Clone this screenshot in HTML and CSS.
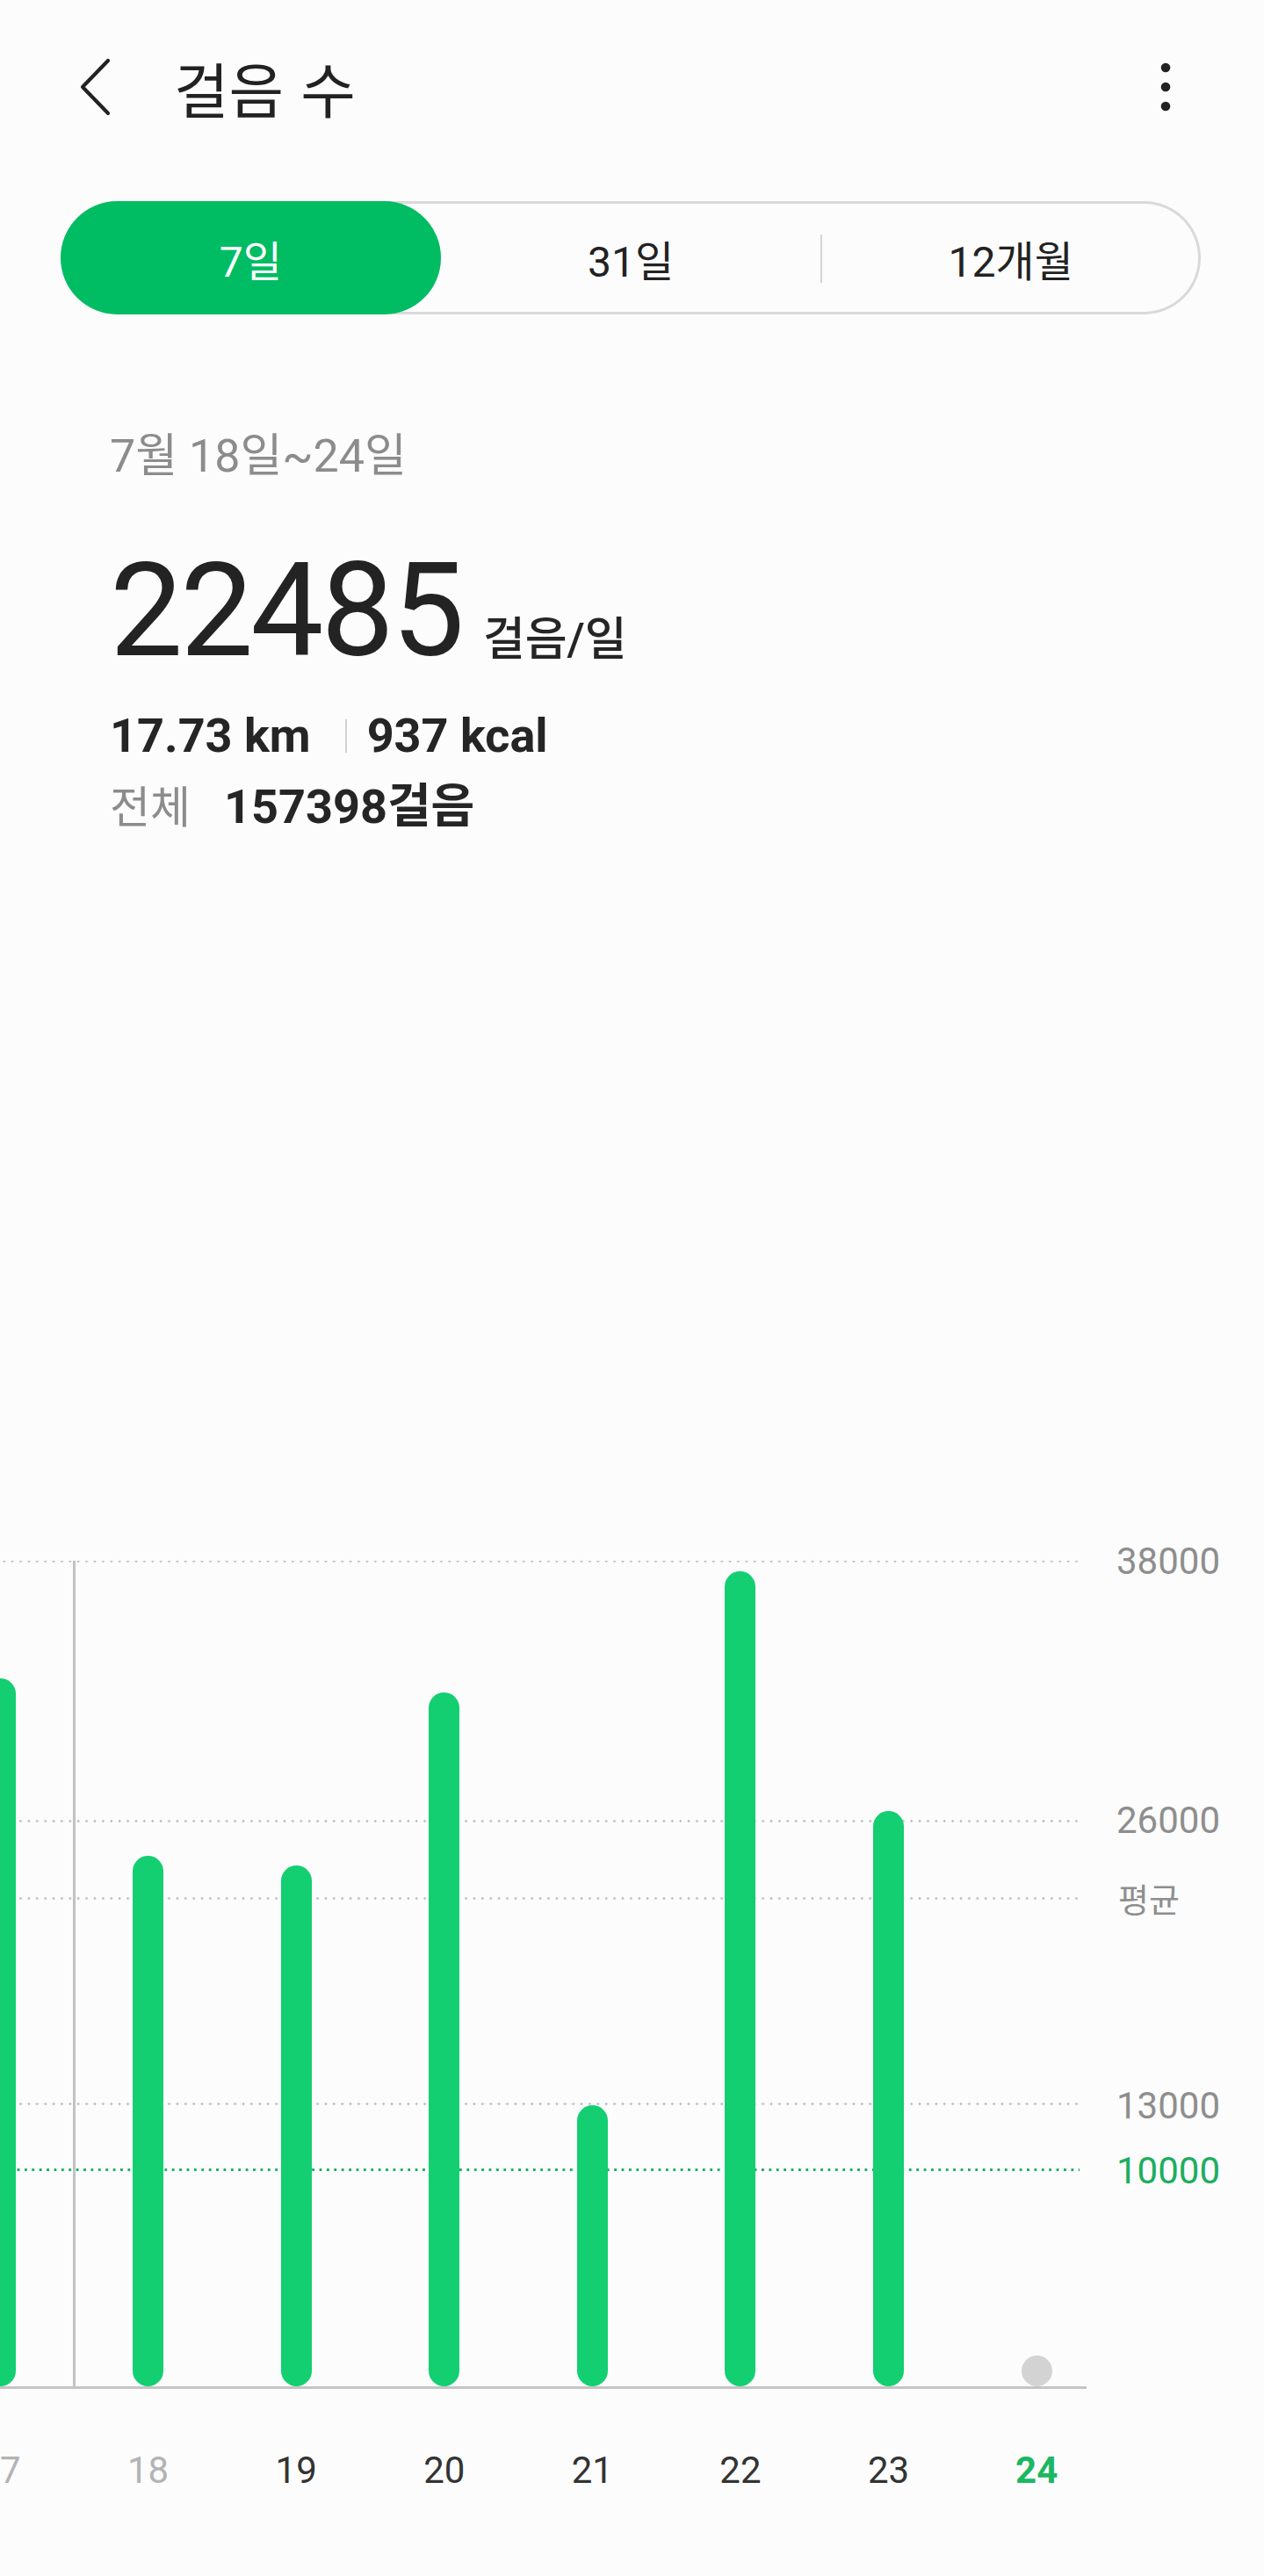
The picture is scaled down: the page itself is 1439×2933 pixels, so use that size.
FILE: index.html
```html
<!DOCTYPE html>
<html lang="ko">
<head>
<meta charset="utf-8">
<title>걸음 수</title>
<link rel="stylesheet" href="styles.css">
</head>
<body>
<div class="page">
  <header class="header">
    <svg class="back" width="40" height="70" viewBox="0 0 40 70" aria-hidden="true">
      <path d="M35 4 L6 34 L35 64" fill="none" stroke="#222" stroke-width="4.2" stroke-linecap="round" stroke-linejoin="round"/>
    </svg>
    <h1 class="title">걸음 수</h1>
    <svg class="more" width="24" height="60" viewBox="0 0 24 60" aria-hidden="true">
      <circle cx="12" cy="7" r="5.3" fill="#222"/>
      <circle cx="12" cy="29" r="5.3" fill="#222"/>
      <circle cx="12" cy="51" r="5.3" fill="#222"/>
    </svg>
  </header>

  <nav class="tabs">
    <div class="tab tab-active">7일</div>
    <div class="tab">31일</div>
    <div class="tab tab-sep">12개월</div>
  </nav>

  <section class="summary">
    <div class="date">7월 18일~24일</div>
    <div class="big"><span class="big-num">22485</span><span class="big-unit">걸음/일</span></div>
    <div class="stats"><span>17.73 km</span><span class="vsep"></span><span>937 kcal</span></div>
    <div class="total"><span class="total-label">전체</span><span>157398걸음</span></div>
  </section>

  <section class="chart">
    <div class="plot">
      <div class="grid-line" style="top:-1.5px"></div>
      <div class="grid-line" style="top:294.5px"></div>
      <div class="grid-line" style="top:382.5px"></div>
      <div class="grid-line" style="top:616.5px"></div>
      <div class="grid-line grid-goal" style="top:691.5px"></div>
      <div class="week-line"></div>
      <div class="cols">
        <div class="col"><div class="bar" style="height:806px"></div></div>
        <div class="col"><div class="bar" style="height:604px"></div></div>
        <div class="col"><div class="bar" style="height:593px"></div></div>
        <div class="col"><div class="bar" style="height:790px"></div></div>
        <div class="col"><div class="bar" style="height:320px"></div></div>
        <div class="col"><div class="bar" style="height:928px"></div></div>
        <div class="col"><div class="bar" style="height:655px"></div></div>
        <div class="col"><div class="dot"></div></div>
      </div>
    </div>
    <div class="yaxis">
      <span class="ylabel" style="top:-20px">38000</span>
      <span class="ylabel" style="top:275px">26000</span>
      <span class="ylabel ylabel-avg" style="top:364px">평균</span>
      <span class="ylabel" style="top:600px">13000</span>
      <span class="ylabel ylabel-goal" style="top:674px">10000</span>
    </div>
    <div class="xaxis">
      <div class="xlabels">
        <span class="xlabel xlabel-past">17</span>
        <span class="xlabel xlabel-past">18</span>
        <span class="xlabel">19</span>
        <span class="xlabel">20</span>
        <span class="xlabel">21</span>
        <span class="xlabel">22</span>
        <span class="xlabel">23</span>
        <span class="xlabel xlabel-today">24</span>
      </div>
    </div>
  </section>
</div>
</body>
</html>
```

FILE: styles.css
```css
html, body {
  margin: 0;
  padding: 0;
  background: #fcfcfc;
}

body {
  font-family: Roboto, "Noto Sans CJK KR", sans-serif;
  color: #252525;
  overflow-x: hidden;
}

.page {
  width: 1439px;
  min-height: 2933px;
}

/* Header */
.header {
  display: flex;
  align-items: center;
  height: 200px;
  padding: 0 100px 0 88px;
  box-sizing: border-box;
}

.back {
  flex: 0 0 auto;
}

.title {
  margin: 0 0 0 70px;
  font-family: "Noto Sans CJK KR", sans-serif;
  font-weight: 400;
  font-size: 68px;
  line-height: 68px;
  color: #222;
}

.more {
  margin-left: auto;
}

/* Segmented tabs */
.tabs {
  display: grid;
  grid-template-columns: repeat(3, 1fr);
  height: 129px;
  margin: 29px 72px 0 69px;
  border-radius: 65px;
  box-shadow: inset 0 0 0 3px #d9d9d9;
}

.tab {
  position: relative;
  display: flex;
  align-items: center;
  justify-content: center;
  font-size: 48px;
  color: #222;
  border-radius: 65px;
}

.tab-active {
  background: #00bc62;
  color: #fff;
}

.tab-sep::before {
  content: "";
  position: absolute;
  left: 0;
  top: 38px;
  width: 2px;
  height: 55px;
  background: #d5d5d5;
}

/* Summary */
.summary {
  padding-left: 125px;
}

.date {
  margin-top: 132px;
  font-size: 52px;
  line-height: 60px;
  color: #8c8c8c;
}

.big {
  margin-top: 72px;
  font-size: 148px;
  line-height: 148px;
  white-space: nowrap;
}

.big-num {
  letter-spacing: -3px;
  color: #232323;
}

.big-unit {
  margin-left: 24px;
  font-size: 52px;
  line-height: 52px;
  font-weight: 500;
  color: #252525;
}

.stats {
  display: flex;
  align-items: center;
  margin-top: 36px;
  font-size: 54px;
  line-height: 64px;
  font-weight: 700;
  color: #252525;
}

.vsep {
  width: 2px;
  height: 38px;
  margin: 0 23px 0 39px;
  background: #d2d2d2;
}

.total {
  margin-top: 17px;
  font-size: 54px;
  line-height: 64px;
  font-weight: 700;
  color: #252525;
}

.total-label {
  font-size: 50px;
  font-weight: 400;
  color: #8c8c8c;
  margin-right: 38px;
}

/* Chart */
.chart {
  display: grid;
  grid-template-columns: 1237px 1fr;
  margin-top: 825px;
}

.plot {
  position: relative;
  height: 940px;
  border-bottom: 3px solid #c4c4c4;
  overflow: hidden;
}

.grid-line {
  position: absolute;
  left: 0;
  width: 1229px;
  height: 3px;
  background-image: radial-gradient(circle, #c4c4c4 1.3px, transparent 1.7px);
  background-size: 9.4px 3px;
  background-repeat: repeat-x;
}

.grid-goal {
  background-image: radial-gradient(circle, #1fae63 1.4px, transparent 1.8px);
  background-size: 8.4px 3px;
}

.week-line {
  position: absolute;
  left: 83px;
  top: 0;
  bottom: 0;
  width: 3px;
  background: #c2c2c2;
}

.cols {
  position: relative;
  display: flex;
  align-items: flex-end;
  height: 100%;
  margin-left: -84.3px;
}

.col {
  flex: 0 0 168.6px;
  display: flex;
  justify-content: center;
  align-items: flex-end;
}

.bar {
  width: 35px;
  border-radius: 17.5px;
  background: #13cf71;
}

.dot {
  width: 35px;
  height: 35px;
  border-radius: 50%;
  background: #d3d3d3;
}

.yaxis {
  position: relative;
}

.ylabel {
  position: absolute;
  left: 34px;
  font-size: 42px;
  line-height: 42px;
  color: #8e8e8e;
  white-space: nowrap;
}

.ylabel-avg {
  font-family: "Noto Sans CJK KR", sans-serif;
  font-size: 38px;
  line-height: 40px;
  left: 36px;
}

.ylabel-goal {
  color: #1aae5e;
}

.xaxis {
  grid-column: 1 / span 2;
  overflow: hidden;
  margin-top: 64px;
  padding: 4px 0 8px;
}

.xlabels {
  display: flex;
  margin-left: -84.3px;
}

.xlabel {
  flex: 0 0 168.6px;
  text-align: center;
  font-size: 42px;
  line-height: 50px;
  color: #333;
}

.xlabel-past {
  color: #b3b3b3;
}

.xlabel-today {
  color: #1cb763;
  font-weight: 700;
}
```
